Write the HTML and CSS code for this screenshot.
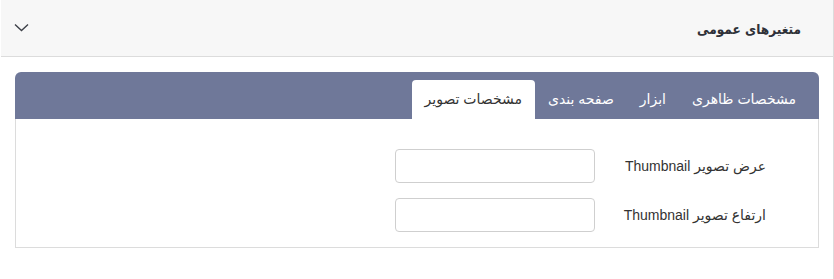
FILE: index.html
```html
<!DOCTYPE html>
<html lang="fa" dir="rtl">
<head>
<meta charset="utf-8">
<link rel="stylesheet" href="styles.css">
</head>
<body>
<div class="card">
  <div class="card-header">
    <span class="title">متغیرهای عمومی</span>
    <svg class="chevron" width="15" height="9" viewBox="0 0 15 9"><path d="M1 1.5 L7.5 7.5 L14 1.5" fill="none" stroke="#3d4048" stroke-width="1.4"/></svg>
  </div>
  <div class="card-body">
    <div class="tabs">
      <ul class="tab-list">
        <li class="tab">مشخصات ظاهری</li>
        <li class="tab">ابزار</li>
        <li class="tab">صفحه بندی</li>
        <li class="tab active">مشخصات تصویر</li>
      </ul>
      <div class="tab-content">
        <div class="row">
          <label class="label">عرض تصویر Thumbnail</label>
          <input class="input" type="text">
        </div>
        <div class="row">
          <label class="label">ارتفاع تصویر Thumbnail</label>
          <input class="input" type="text">
        </div>
      </div>
    </div>
  </div>
</div>
</body>
</html>
```
FILE: styles.css
```css
html, body {
  margin: 0;
  padding: 0;
  background: #fff;
}
body {
  font-family: "Liberation Sans", "DejaVu Sans", sans-serif;
  color: #333;
  width: 834px;
}
.card {
  width: 833px;
  border-right: 1px solid #dcdcdc;
  box-sizing: border-box;
  height: 279px;
}
.card-header {
  height: 56px;
  background: #f7f7f7;
  border-bottom: 1px solid #dcdcdc;
  display: flex;
  align-items: center;
  justify-content: space-between;
  padding: 0 32px 0 13px;
}
.title {
  font-family: "DejaVu Sans Condensed", "DejaVu Sans", sans-serif;
  font-size: 13.5px;
  font-weight: bold;
  color: #2f3138;
  margin-top: 2px;
}
.chevron {
  display: block;
  margin-top: -1px;
}
.card-body {
  padding: 15px 14px 0 14px;
}
.tabs {
  display: flex;
  flex-direction: column;
}
.tab-list {
  list-style: none;
  margin: 0;
  padding: 8px 10px 0 8px;
  height: 47px;
  box-sizing: border-box;
  background: #6f7899;
  border-radius: 6px 6px 0 0;
  display: flex;
  align-items: stretch;
}
.tab {
  color: #fff;
  font-size: 14px;
  padding: 0 13px 2px;
  display: flex;
  align-items: center;
  border-radius: 4px 4px 0 0;
}
.tab.active {
  background: #fff;
  color: #333;
}
.tab-content {
  border: 1px solid #dcdcdc;
  border-top: none;
  height: 129px;
  box-sizing: border-box;
  padding: 30px 52px 0 0;
  display: flex;
  flex-direction: column;
  gap: 15px;
}
.row {
  display: flex;
  align-items: center;
  gap: 16px;
}
.label {
  width: 155px;
  font-size: 14px;
  color: #333;
}
.input {
  width: 200px;
  height: 34px;
  box-sizing: border-box;
  border: 1px solid #cfcfcf;
  border-radius: 4px;
  background: #fff;
  margin: 0;
}
```
